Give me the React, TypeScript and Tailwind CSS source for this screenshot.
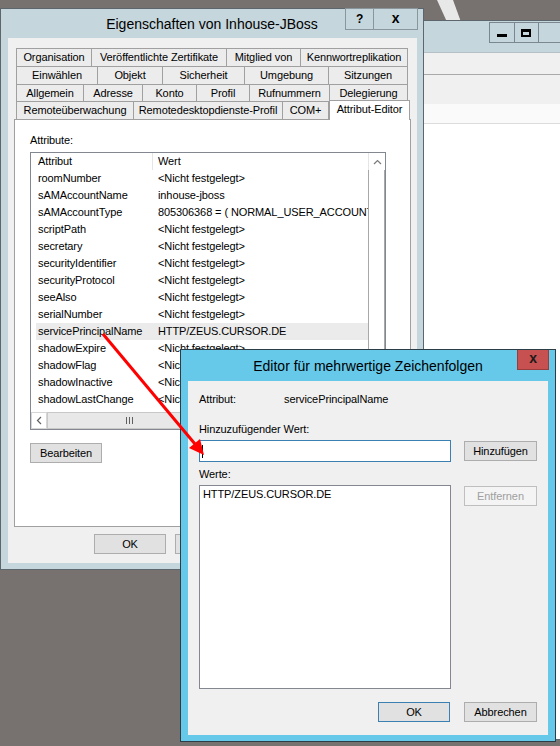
import React from "react";

const NF = "<Nicht festgelegt>";

const attrs: [string, string][] = [
  ["roomNumber", NF],
  ["sAMAccountName", "inhouse-jboss"],
  ["sAMAccountType", "805306368 = ( NORMAL_USER_ACCOUNT )"],
  ["scriptPath", NF],
  ["secretary", NF],
  ["securityIdentifier", NF],
  ["securityProtocol", NF],
  ["seeAlso", NF],
  ["serialNumber", NF],
  ["servicePrincipalName", "HTTP/ZEUS.CURSOR.DE"],
  ["shadowExpire", NF],
  ["shadowFlag", NF],
  ["shadowInactive", NF],
  ["shadowLastChange", NF],
];

const tabRows: [string, number][][] = [
  [["Organisation", 76], ["Veröffentlichte Zertifikate", 135], ["Mitglied von", 74], ["Kennwortreplikation", 107]],
  [["Einwählen", 82], ["Objekt", 65], ["Sicherheit", 82], ["Umgebung", 84], ["Sitzungen", 79]],
  [["Allgemein", 68], ["Adresse", 59], ["Konto", 54], ["Profil", 53], ["Rufnummern", 80], ["Delegierung", 78]],
];

const row4: [string, number][] = [["Remoteüberwachung", 118], ["Remotedesktopdienste-Profil", 149], ["COM+", 46]];

function Button({ label, w, def, disabled }: { label: string; w: string; def?: boolean; disabled?: boolean }) {
  return (
    <div
      className={`${w} h-[20px] flex items-center justify-center border ${
        disabled
          ? "border-[#bfbfbf] bg-[#f4f4f4] text-[#a0a0a0]"
          : def
          ? "border-[#3c7fb1] bg-[#e1e1e1]"
          : "border-[#adadad] bg-[#e1e1e1]"
      }`}
    >
      {label}
    </div>
  );
}

function BackWindow() {
  return (
    <div className="absolute left-[420px] top-[20px] w-[160px] h-[720px] border border-[#5d666c] bg-white flex flex-col">
      <div className="h-[31px] bg-[#c5d6dc] flex items-start pl-[68px]">
        <div className="mt-[1px] w-[29px] h-[21px] border border-[#7b8790] flex items-end justify-center pb-[5px]">
          <div className="w-[10px] h-[3px] bg-black" />
        </div>
        <div className="mt-[1px] w-[26px] h-[21px] border border-l-0 border-[#7b8790] flex items-center justify-center">
          <div className="w-[10px] h-[8px] border-2 border-t-[3px] border-black" />
        </div>
        <div className="mt-[1px] w-[45px] h-[21px] border border-l-0 border-[#7b8790]" />
      </div>
      <div className="h-[22px] bg-[#f0f0f0] border-t border-[#b4c0c6]" />
      <div className="h-[30px] bg-[#f0f0f0] border-t border-[#a9a9a9]" />
      <div className="h-[20px] bg-[#fafafa] border-b border-[#dcdcdc]" />
      <div className="flex-1 bg-white" />
    </div>
  );
}

function ListView() {
  return (
    <div className="ml-[1px] w-[356px] h-[278px] border border-[#828790] bg-white flex flex-col">
      <div className="flex flex-1">
        <div className="flex-1 flex flex-col overflow-hidden">
          <div className="h-[17px] flex shrink-0">
            <div className="w-[122px] pl-[7px] leading-[17px] border-r border-[#e5e5e5]">Attribut</div>
            <div className="flex-1 pl-[5px] leading-[17px]">Wert</div>
          </div>
          {attrs.map(([a, v]) => (
            <div
              key={a}
              className={`ml-[5px] h-[17px] flex leading-[17px] whitespace-nowrap ${
                a === "servicePrincipalName" ? "bg-[#ebebeb]" : ""
              }`}
            >
              <div className="w-[117px] pl-[2px] overflow-hidden">{a}</div>
              <div className="flex-1 pl-[5px] overflow-hidden">{v}</div>
            </div>
          ))}
        </div>
        <div className="w-[17px] flex flex-col bg-white">
          <div className="h-[17px] flex items-center justify-center border-l border-[#e5e5e5]">
            <svg width="9" height="6" viewBox="0 0 9 6">
              <polyline points="1,5 4.5,1.5 8,5" fill="none" stroke="#7a7a7a" strokeWidth="1.2" />
            </svg>
          </div>
          <div className="flex-1 border-x border-[#a8a8a8] bg-white" />
        </div>
      </div>
      <div className="h-[17px] flex">
        <div className="w-[16px] flex items-center justify-center border border-[#d6d6d6] bg-white">
          <svg width="6" height="9" viewBox="0 0 6 9">
            <polyline points="5,1 1.5,4.5 5,8" fill="none" stroke="#606060" strokeWidth="1.2" />
          </svg>
        </div>
        <div className="w-[164px] border border-[#c8c8c8] bg-[#e8e8e8] flex items-center justify-center gap-[2px]">
          <div className="w-px h-[7px] bg-[#606060]" />
          <div className="w-px h-[7px] bg-[#606060]" />
          <div className="w-px h-[7px] bg-[#606060]" />
        </div>
        <div className="flex-1 bg-[#f0f0f0]" />
        <div className="w-[17px] bg-[#f0f0f0]" />
      </div>
    </div>
  );
}

function PropertiesDialog() {
  return (
    <div className="absolute left-0 top-[8px] w-[424px] h-[562px] border border-[#5d666c] bg-[#c5d6dc] flex flex-col">
      <div className="h-[29px] flex items-start shrink-0">
        <div className="w-[78px]" />
        <div className="flex-1 text-center text-[14px] leading-[30px] tracking-normal">Eigenschaften von Inhouse-JBoss</div>
        <div className="flex -mt-px pr-[5px]">
          <div className="w-[29px] h-[22px] border border-[#8b959c] flex items-center justify-center font-bold text-[12px]">?</div>
          <div className="w-[44px] h-[22px] border border-l-0 border-[#8b959c] flex items-center justify-center font-bold text-[14px] leading-none pb-[2px]">
            x
          </div>
        </div>
      </div>
      <div className="ml-[7px] mr-[6px] mb-[6px] flex-1 bg-[#f0f0f0] flex flex-col">
        <div className="mt-[10px] ml-[8px] flex flex-col">
          {tabRows.map((row, ri) => (
            <div key={ri} className="flex h-[18px]">
              {row.map(([t, w], i) => (
                <div
                  key={t}
                  style={{ width: w }}
                  className={`h-[18px] flex items-center justify-center bg-[#ececec] border-t border-r border-[#a0a0a0] whitespace-nowrap ${
                    i === 0 ? "border-l" : ""
                  } ${ri === 2 ? "border-b" : ""}`}
                >
                  {t}
                </div>
              ))}
            </div>
          ))}
          <div className="relative z-10 -mt-[2px] flex h-[20px] items-start">
            {row4.map(([t, w], i) => (
              <div
                key={t}
                style={{ width: w }}
                className={`mt-[2px] h-[17px] flex items-center justify-center bg-[#ececec] border-r border-[#a0a0a0] whitespace-nowrap ${
                  i === 0 ? "border-l" : ""
                }`}
              >
                {t}
              </div>
            ))}
            <div className="w-[81px] h-[20px] flex items-center justify-center bg-white border-t border-x border-[#a0a0a0] pb-[2px]">
              Attribut-Editor
            </div>
          </div>
        </div>
        <div className="-mt-px ml-[6px] w-[397px] h-[408px] bg-white border border-[#a0a0a0] pl-[14px] flex flex-col">
          <div className="pt-[13px] pl-px leading-[15px]">Attribute:</div>
          <div className="mt-[4px]">
            <ListView />
          </div>
          <div className="mt-[13px] ml-px">
            <Button label="Bearbeiten" w="w-[72px]" />
          </div>
        </div>
        <div className="mt-[7px] flex justify-end gap-[9px] pr-[8px]">
          <Button label="OK" w="w-[72px]" />
          <Button label="Abbrechen" w="w-[72px]" />
          <Button label="Übernehmen" w="w-[72px]" />
          <Button label="Hilfe" w="w-[72px]" />
        </div>
      </div>
    </div>
  );
}

function EditorDialog() {
  return (
    <div className="absolute left-[180px] top-[349px] w-[376px] h-[393px] border border-[#2b3d47] bg-[#67c9ea] flex flex-col">
      <div className="h-[31px] flex items-start shrink-0">
        <div className="w-[38px]" />
        <div className="flex-1 text-center text-[14px] leading-[32px] tracking-normal">Editor für mehrwertige Zeichenfolgen</div>
        <div className="pr-[6px]">
          <div className="w-[32px] h-[20px] bg-[#c75050] border border-[#9b3c3c] border-t-0 flex items-center justify-center font-bold text-[14px] leading-none pb-[3px] text-[#1a1a1a]">
            x
          </div>
        </div>
      </div>
      <div className="mx-[7px] mb-[6px] flex-1 bg-[#f0f0f0] px-[11px] flex flex-col">
        <div className="mt-[11px] flex leading-[15px]">
          <div className="w-[85px] shrink-0">Attribut:</div>
          <div>servicePrincipalName</div>
        </div>
        <div className="mt-[15px] leading-[15px]">Hinzuzufügender Wert:</div>
        <div className="mt-[3px] flex items-center justify-between h-[22px]">
          <div className="w-[252px] h-[22px] border border-[#3c7fb1] bg-white flex items-center pl-[2px]">
            <div className="w-px h-[13px] bg-black" />
          </div>
          <Button label="Hinzufügen" w="w-[73px]" />
        </div>
        <div className="mt-[5px] leading-[15px]">Werte:</div>
        <div className="mt-[3px] flex justify-between items-start">
          <div className="w-[252px] h-[204px] border border-[#828790] bg-white pl-[3px] pt-px leading-[15px]">HTTP/ZEUS.CURSOR.DE</div>
          <div className="mt-px">
            <Button label="Entfernen" w="w-[73px]" disabled />
          </div>
        </div>
        <div className="mt-[13px] flex justify-end gap-[14px]">
          <Button label="OK" w="w-[72px]" def />
          <Button label="Abbrechen" w="w-[73px]" />
        </div>
      </div>
    </div>
  );
}

export default function App() {
  return (
    <div className="relative w-[560px] h-[746px] overflow-hidden bg-[#77716f] font-['Liberation_Sans',Arial,sans-serif] text-[11px] text-black tracking-[-0.1px]">
      <svg className="absolute left-0 top-0" width="560" height="30">
        <polygon points="437,0 453,0 461,22 447,22" fill="#e8e8e8" />
      </svg>
      <BackWindow />
      <PropertiesDialog />
      <EditorDialog />
      <svg className="absolute left-0 top-0 pointer-events-none" width="560" height="746">
        <line x1="103" y1="334" x2="195" y2="444" stroke="#ff0000" strokeWidth="3" />
        <polygon points="204,455 189,448 200,439" fill="#ff0000" />
      </svg>
    </div>
  );
}
